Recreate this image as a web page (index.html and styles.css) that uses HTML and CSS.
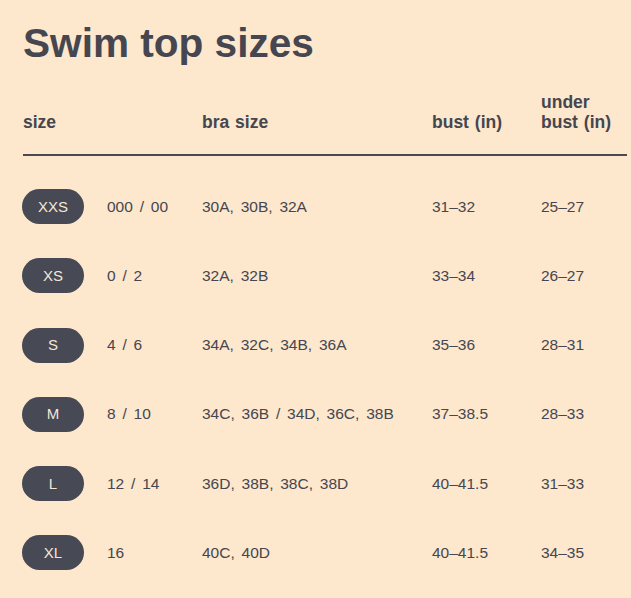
FILE: index.html
```html
<!DOCTYPE html>
<html lang="en">
<head>
<meta charset="utf-8">
<title>Swim top sizes</title>
<link rel="stylesheet" href="styles.css">
</head>
<body>
<main class="page">
  <h1 class="title">Swim top sizes</h1>
  <div class="table">
    <div class="head">
      <div class="h-size">size</div>
      <div>bra size</div>
      <div>bust (in)</div>
      <div>under<br>bust (in)</div>
    </div>
    <div class="rows">
      <div class="row"><span class="pill">XXS</span><span>000 / 00</span><span>30A, 30B, 32A</span><span>31–32</span><span>25–27</span></div>
      <div class="row"><span class="pill">XS</span><span>0 / 2</span><span>32A, 32B</span><span>33–34</span><span>26–27</span></div>
      <div class="row"><span class="pill">S</span><span>4 / 6</span><span>34A, 32C, 34B, 36A</span><span>35–36</span><span>28–31</span></div>
      <div class="row"><span class="pill">M</span><span>8 / 10</span><span>34C, 36B / 34D, 36C, 38B</span><span>37–38.5</span><span>28–33</span></div>
      <div class="row"><span class="pill">L</span><span>12 / 14</span><span>36D, 38B, 38C, 38D</span><span>40–41.5</span><span>31–33</span></div>
      <div class="row"><span class="pill">XL</span><span>16</span><span>40C, 40D</span><span>40–41.5</span><span>34–35</span></div>
    </div>
  </div>
</main>
</body>
</html>
```
FILE: styles.css
```css
html, body {
  margin: 0;
  padding: 0;
  background: #fde7cd;
}
body {
  font-family: "Liberation Sans", Arial, sans-serif;
  color: #45464f;
}
.page {
  padding: 19px 4px 0 23px;
}
.title {
  margin: 0;
  font-size: 40.6px;
  line-height: 48px;
  font-weight: 700;
}
.table {
  margin-top: 25px;
}
.head {
  display: grid;
  grid-template-columns: 179px 230px 109px 1fr;
  align-items: end;
  font-size: 17.5px;
  line-height: 20px;
  font-weight: 700;
  word-spacing: 1px;
  padding-bottom: 22px;
  border-bottom: 2px solid #4a4a50;
}
.rows {
  display: flex;
  flex-direction: column;
  gap: 34.3px;
  margin-top: 33px;
}
.row {
  display: grid;
  grid-template-columns: 84px 95px 230px 109px 1fr;
  align-items: center;
  font-size: 15.5px;
  line-height: 18px;
  word-spacing: 2.5px;
}
.pill {
  box-sizing: border-box;
  width: 62px;
  height: 35px;
  margin-left: -1px;
  border-radius: 18px;
  background: #474955;
  color: #f4e6d6;
  display: flex;
  align-items: center;
  justify-content: center;
  font-size: 15px;
  word-spacing: 0;
}
```
